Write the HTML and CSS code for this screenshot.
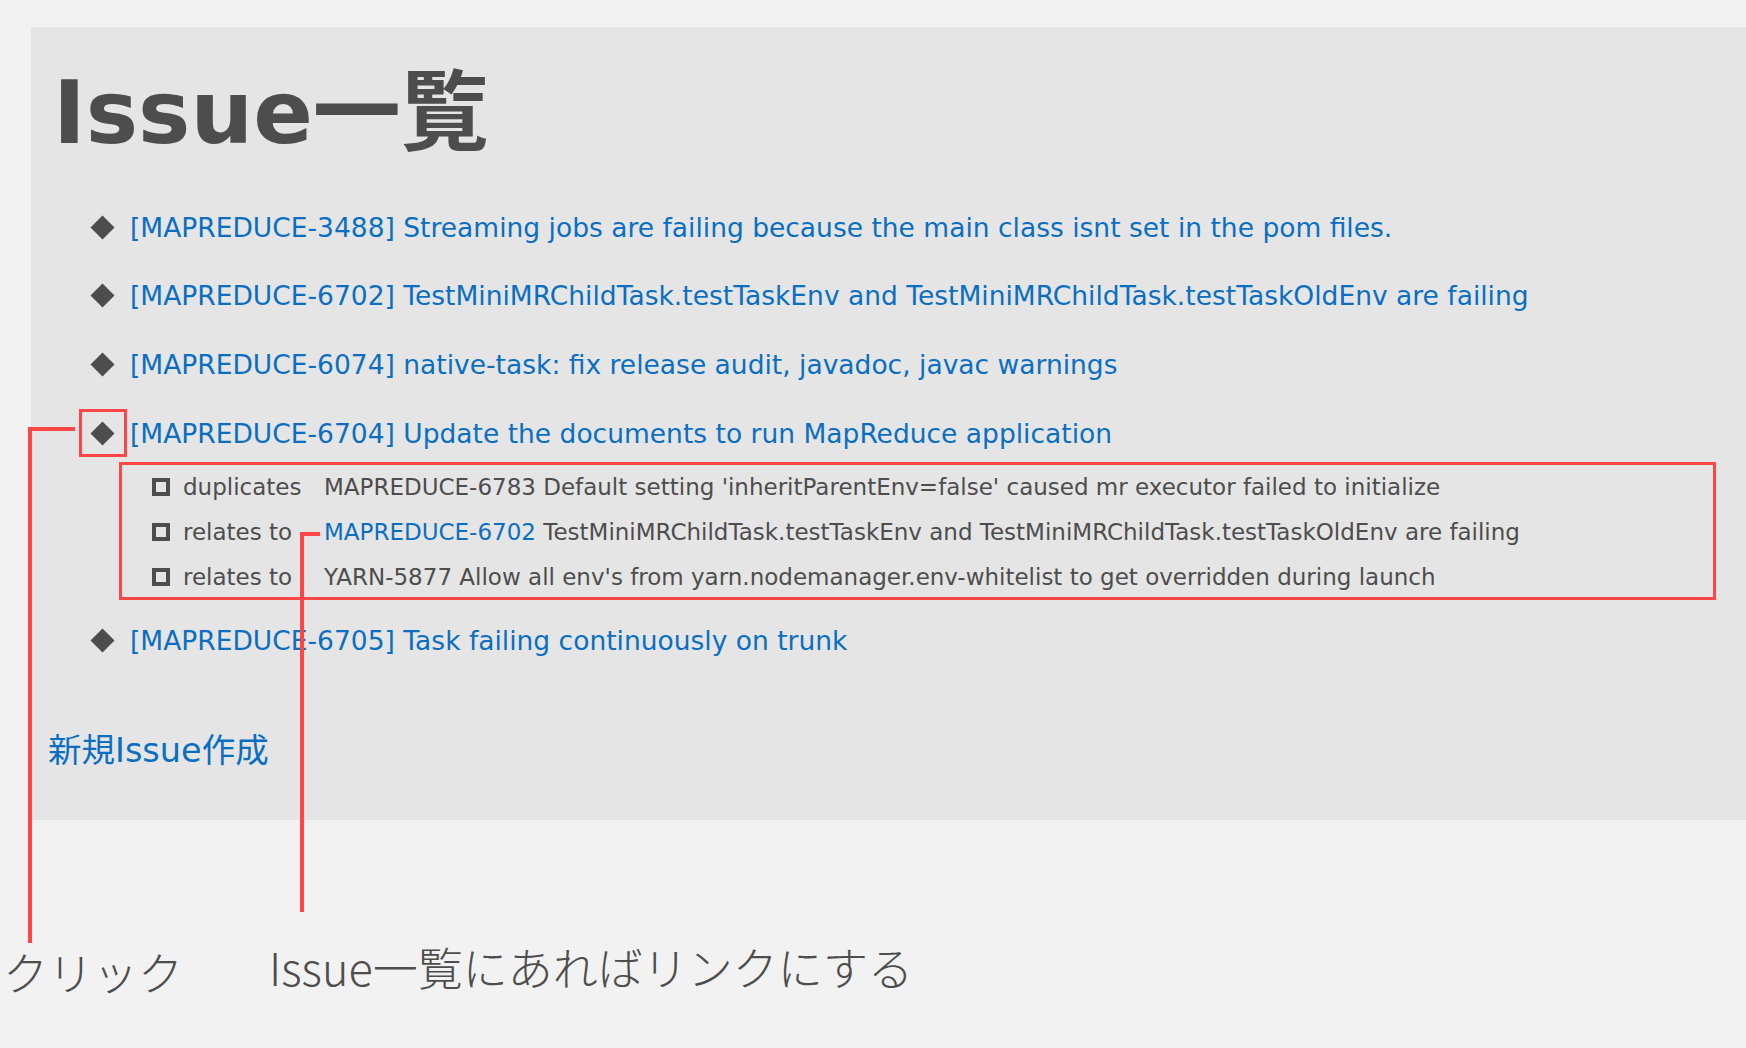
FILE: index.html
```html
<!DOCTYPE html>
<html lang="ja">
<head>
<meta charset="utf-8">
<title>Issue一覧</title>
<link rel="stylesheet" href="styles.css">
</head>
<body>
<div class="page">
  <section class="panel">
    <h1 class="title">Issue一覧</h1>
    <ul class="issues">
      <li class="issue"><div class="issue-row"><span class="bullet"></span><a class="issue-link">[MAPREDUCE-3488] Streaming jobs are failing because the main class isnt set in the pom files.</a></div></li>
      <li class="issue"><div class="issue-row"><span class="bullet"></span><a class="issue-link">[MAPREDUCE-6702] TestMiniMRChildTask.testTaskEnv and TestMiniMRChildTask.testTaskOldEnv are failing</a></div></li>
      <li class="issue"><div class="issue-row"><span class="bullet"></span><a class="issue-link">[MAPREDUCE-6074] native-task: fix release audit, javadoc, javac warnings</a></div></li>
      <li class="issue issue-open"><div class="issue-row"><span class="bullet"></span><a class="issue-link">[MAPREDUCE-6704] Update the documents to run MapReduce application</a></div>
        <ul class="links">
          <li class="link"><span class="square"></span><span class="rel">duplicates</span><span class="target">MAPREDUCE-6783 Default setting 'inheritParentEnv=false' caused mr executor failed to initialize</span></li>
          <li class="link"><span class="square"></span><span class="rel">relates to</span><span class="target"><a class="target-link">MAPREDUCE-6702</a> TestMiniMRChildTask.testTaskEnv and TestMiniMRChildTask.testTaskOldEnv are failing</span></li>
          <li class="link"><span class="square"></span><span class="rel">relates to</span><span class="target">YARN-5877 Allow all env's from yarn.nodemanager.env-whitelist to get overridden during launch</span></li>
        </ul>
      </li>
      <li class="issue"><div class="issue-row"><span class="bullet"></span><a class="issue-link">[MAPREDUCE-6705] Task failing continuously on trunk</a></div></li>
    </ul>
    <a class="new-issue">新規Issue作成</a>
  </section>
  <div class="notes">
    <span class="note note-click">クリック</span>
    <span class="note note-link">Issue一覧にあればリンクにする</span>
  </div>
  <svg class="callouts" width="1746" height="1048" viewBox="0 0 1746 1048">
    <rect x="80.5" y="410.5" width="45" height="45" fill="none" stroke="#ff4646" stroke-width="3"/>
    <polyline points="75,429 30,429 30,943" fill="none" stroke="#ff4646" stroke-width="4"/>
    <polyline points="320,534 302,534 302,912" fill="none" stroke="#ff4646" stroke-width="4"/>
  </svg>
</div>
</body>
</html>
```

FILE: styles.css
```css
html, body {
  margin: 0;
  padding: 0;
}
body {
  background: #f2f2f2;
  color: #4d4d4d;
  font-family: "DejaVu Sans", "Noto Sans CJK JP", sans-serif;
}
.page {
  position: relative;
  width: 1746px;
  height: 1048px;
  overflow: hidden;
}
.panel {
  margin: 27px 0 0 31px;
  background: #e5e5e5;
  padding: 41px 0 49px 17px;
}
.title {
  margin: 0 0 0 5px;
  font-size: 88px;
  line-height: 90px;
  font-weight: 700;
  color: #4d4d4d;
}
.issues {
  list-style: none;
  margin: 49px 0 0 0;
  padding: 0;
}
.issue {
  margin: 0 0 28.7px 0;
}
.issue:last-child {
  margin-bottom: 0;
}
.issue-open {
  margin-bottom: 20px;
}
.issue-row {
  display: flex;
  align-items: center;
  height: 40px;
  padding-left: 42px;
}
.bullet {
  width: 25px;
  height: 25px;
  flex: none;
  display: flex;
  align-items: center;
  justify-content: center;
  margin-right: 15px;
}
.bullet::before {
  content: "";
  width: 17px;
  height: 17px;
  background: #4d4d4d;
  transform: rotate(45deg);
}
.issue-link {
  color: #0a6fc2;
  font-size: 26.5px;
  line-height: 40px;
  white-space: nowrap;
  padding-top: 1px;
}
.links {
  list-style: none;
  margin: 9px 30px 0 71px;
  padding: 2px 0 0 30px;
  border: 3px solid #ff4646;
  display: flex;
  flex-direction: column;
  gap: 5px;
}
.link {
  display: flex;
  align-items: center;
  height: 40px;
  font-size: 23px;
  line-height: 40px;
  color: #4d4d4d;
  white-space: nowrap;
}
.square {
  width: 18px;
  height: 18px;
  box-sizing: border-box;
  border: 4px solid #4d4d4d;
  flex: none;
  margin-right: 13px;
}
.rel {
  width: 141px;
  flex: none;
}
.target-link {
  color: #0a6fc2;
}
.new-issue {
  display: block;
  margin-top: 71px;
  font-size: 33.5px;
  line-height: 40px;
  color: #0a6fc2;
}
.notes {
  display: flex;
  align-items: flex-start;
  margin-top: 117px;
  padding-left: 3px;
}
.note {
  font-family: "Noto Sans CJK JP", sans-serif;
  font-size: 45px;
  line-height: 60px;
  font-weight: 300;
  color: #4d4d4d;
}
.note-click {
  margin-top: 5px;
}
.note-link {
  margin-left: 86px;
}
.callouts {
  position: absolute;
  left: 0;
  top: 0;
  pointer-events: none;
}
```
